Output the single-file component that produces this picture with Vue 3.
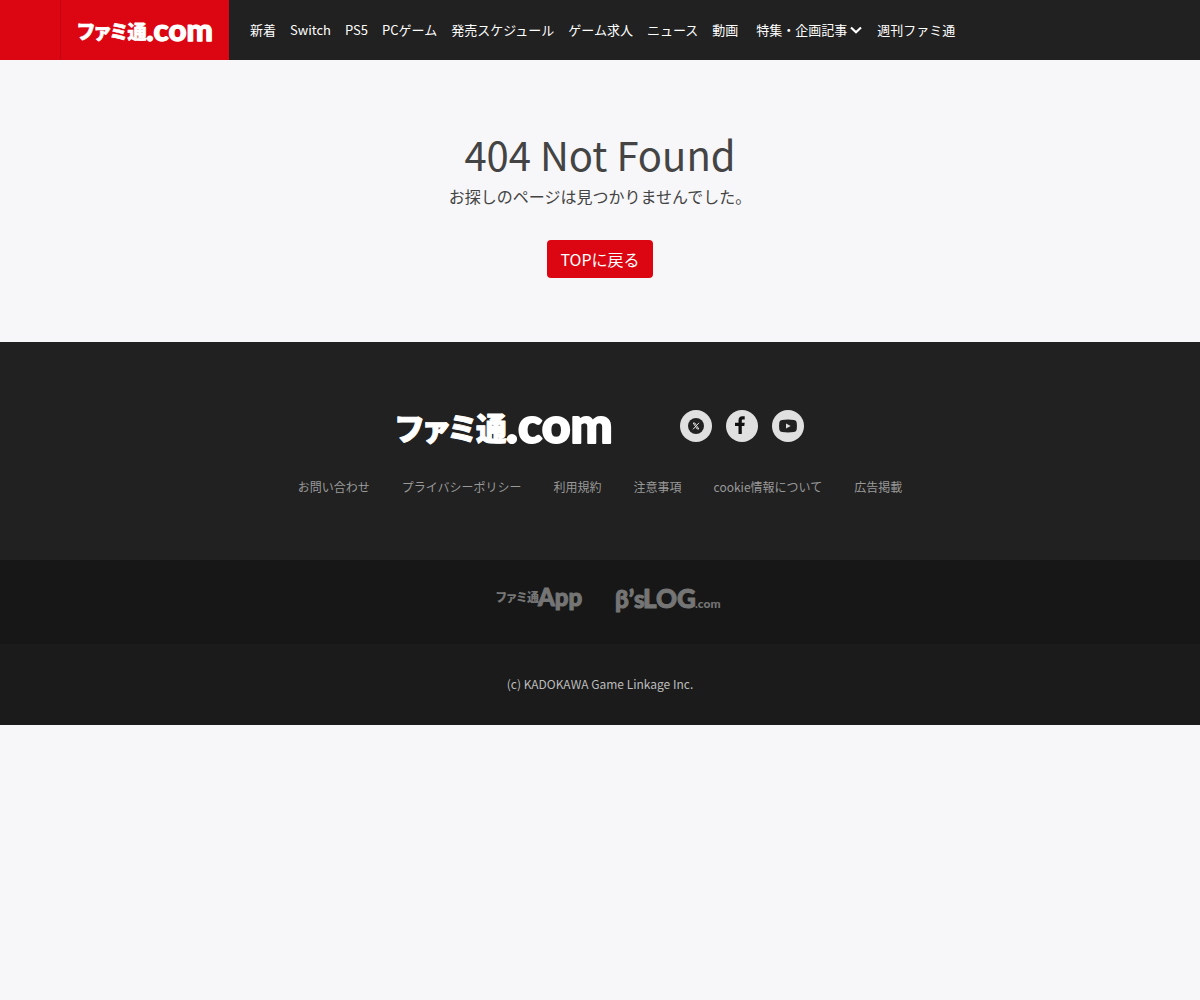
<template>
  <div class="page">
    <header class="header">
      <button class="menu-button" type="button" aria-label="メニュー"></button>
      <a class="header-logo" href="#" aria-label="ファミ通.com">
        <svg class="wordmark" viewBox="0 0 218 40" width="137" height="25">
          <text class="jp" x="0" y="34" font-size="31">ファミ通</text>
          <text class="latin" x="110" y="37" font-size="50">.com</text>
        </svg>
      </a>
      <nav class="nav">
        <a v-for="item in navItems" :key="item" href="#">{{ item }}</a>
        <button class="nav-more" type="button">
          特集・企画記事
          <svg viewBox="0 0 12 8" width="12" height="8">
            <path d="M1 1.5 6 6.3 11 1.5" fill="none" stroke="#fff" stroke-width="2.2" />
          </svg>
        </button>
        <a href="#">週刊ファミ通</a>
      </nav>
    </header>

    <main class="not-found">
      <h1>404 Not Found</h1>
      <p>お探しのページは見つかりませんでした。</p>
      <a class="back-button" href="#">TOPに戻る</a>
    </main>

    <footer>
      <div class="footer-main">
        <div class="footer-brand">
          <a class="footer-logo" href="#" aria-label="ファミ通.com">
            <svg class="wordmark" viewBox="0 0 218 40" width="218" height="40">
              <text class="jp" x="0" y="34" font-size="31">ファミ通</text>
              <text class="latin" x="110" y="37" font-size="50">.com</text>
            </svg>
          </a>
          <div class="social">
            <a href="#" aria-label="X">
              <svg viewBox="0 0 32 32" width="32" height="32">
                <circle cx="16" cy="16" r="8" fill="#212121" />
                <path d="M13.200 13h1.600l4 6h-1.600z" fill="none" stroke="#e0e0e0" stroke-width="1" />
                <path d="M19 12.800l-2.600 2.800M15.600 16.500 13 19.300" stroke="#e0e0e0" stroke-width="1" />
              </svg>
            </a>
            <a href="#" aria-label="Facebook">
              <svg viewBox="0 0 32 32" width="32" height="32">
                <path d="M12.500 24v-8H9v-3.200h3.500v-2.500C12.500 7.500 14 6.300 16.400 6.300h2.300v3.100h-1.600c-1 0-1.300.5-1.300 1.400v2h2.900l-.4 3.200h-2.500v8z" fill="#111" />
              </svg>
            </a>
            <a href="#" aria-label="YouTube">
              <svg viewBox="0 0 32 32" width="32" height="32">
                <path d="M10 9.900q6-.7 12 0 2.500.2 2.700 2.600.5 3.500 0 7-.2 2.400-2.700 2.600-6 .7-12 0-2.500-.2-2.700-2.600-.5-3.500 0-7Q7.500 10.100 10 9.900z" fill="#212121" />
                <path d="M14 13.500 18.700 16 14 18.500z" fill="#e0e0e0" />
              </svg>
            </a>
          </div>
        </div>
        <nav class="footer-links">
          <a v-for="link in footerLinks" :key="link" href="#">{{ link }}</a>
        </nav>
      </div>

      <div class="footer-sites">
        <a href="#" aria-label="ファミ通App">
          <svg class="wordmark small" viewBox="0 0 87 26" width="87" height="26">
            <text class="jp" x="1" y="16" font-size="12">ファミ通</text>
            <text class="latin" x="43" y="20" font-size="24">App</text>
          </svg>
        </a>
        <a href="#" aria-label="B'sLOG.com">
          <svg class="wordmark small" viewBox="0 0 107 26" width="107" height="26">
            <text class="latin" x="1" y="22" font-size="24">β’s</text>
            <text class="latin" x="29" y="22" font-size="26">LOG</text>
            <text class="latin domain" x="81" y="22" font-size="12">.com</text>
          </svg>
        </a>
      </div>

      <p class="copyright">(c) KADOKAWA Game Linkage Inc.</p>
    </footer>
  </div>
</template>

<script setup>
const navItems = [
  '新着',
  'Switch',
  'PS5',
  'PCゲーム',
  '発売スケジュール',
  'ゲーム求人',
  'ニュース',
  '動画'
]

const footerLinks = [
  'お問い合わせ',
  'プライバシーポリシー',
  '利用規約',
  '注意事項',
  'cookie情報について',
  '広告掲載'
]
</script>

<style>
body {
  margin: 0;
  background: #f7f7f9;
}
</style>

<style scoped>
.page {
  font-family: "Noto Sans CJK JP", sans-serif;
  font-size: 16px;
  line-height: 24px;
  color: #444;
}

a {
  color: inherit;
  text-decoration: none;
}

button {
  border: 0;
  padding: 0;
  background: none;
  color: inherit;
  font: inherit;
  cursor: pointer;
}

svg {
  display: block;
}

.wordmark {
  fill: currentColor;
  stroke: currentColor;
  stroke-linejoin: round;
  overflow: visible;
}

.jp {
  font-family: "Noto Sans CJK JP", sans-serif;
  font-weight: 900;
  font-feature-settings: "palt";
  stroke-width: 1px;
}

.latin {
  font-family: Lato, sans-serif;
  font-weight: 900;
  stroke-width: 2px;
}

.small .jp {
  stroke-width: 0;
}

.small .latin {
  stroke-width: 1px;
}

.small .domain {
  stroke-width: 0;
}

.header {
  display: flex;
  height: 60px;
  background: #212121;
  color: #fff;
}

.menu-button {
  flex: none;
  width: 61px;
  background: #dc0612;
  border-right: 1px solid #c20510;
}

.header-logo {
  display: flex;
  align-items: center;
  padding: 0 15px 0 16px;
  background: #dc0612;
}

.nav {
  display: flex;
  align-items: center;
  gap: 14px;
  padding: 0 21px;
  font-size: 13px;
  white-space: nowrap;
}

.nav-more {
  display: flex;
  align-items: center;
  gap: 3px;
  padding: 0 1px 0 4px;
}

.not-found {
  padding: 64px 16px;
  text-align: center;
}

.not-found h1 {
  margin: 0;
  font-size: 40px;
  font-weight: 400;
  line-height: 60px;
}

.not-found p {
  margin: 0 0 32px;
}

.back-button {
  display: inline-block;
  padding: 7px 13px;
  border-radius: 4px;
  background: #dc0612;
  color: #fff;
  vertical-align: top;
}

.footer-main {
  padding: 64px 16px 62px;
  background: #212121;
}

.footer-brand {
  display: flex;
  justify-content: center;
  align-items: center;
  gap: 66px;
  color: #fff;
}

.social {
  display: flex;
  gap: 14px;
}

.social a {
  border-radius: 50%;
  background: #e0e0e0;
}

.footer-links {
  display: flex;
  justify-content: center;
  flex-wrap: wrap;
  gap: 32px;
  margin-top: 30px;
  font-size: 12px;
  line-height: 22px;
  color: #999;
}

.footer-sites {
  display: flex;
  justify-content: center;
  gap: 32px;
  padding: 26px 16px 32px 32px;
  background: #171717;
  color: #757575;
}

.copyright {
  margin: 0;
  padding: 30px 16px 31px;
  background: #1b1b1b;
  color: #bbb;
  font-size: 12px;
  line-height: 20px;
  text-align: center;
}
</style>
